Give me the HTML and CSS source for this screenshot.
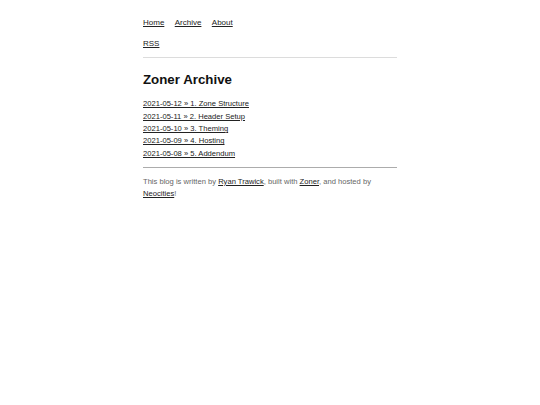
FILE: index.html
```html
<!DOCTYPE html>
<html lang="en">
<head>
<meta charset="utf-8">
<title>Zoner Archive</title>
<link rel="stylesheet" href="styles.css">
</head>
<body>
<div class="page">
  <nav class="nav">
    <div class="nav-row">
      <a href="#">Home</a>
      <a href="#">Archive</a>
      <a href="#">About</a>
    </div>
    <div class="nav-row rss-row">
      <a href="#">RSS</a>
    </div>
  </nav>
  <hr class="rule-top">
  <main>
    <h1 class="title">Zoner Archive</h1>
    <ul class="archive">
      <li><a href="#">2021-05-12 » 1. Zone Structure</a></li>
      <li><a href="#">2021-05-11 » 2. Header Setup</a></li>
      <li><a href="#">2021-05-10 » 3. Theming</a></li>
      <li><a href="#">2021-05-09 » 4. Hosting</a></li>
      <li><a href="#">2021-05-08 » 5. Addendum</a></li>
    </ul>
  </main>
  <hr class="rule-bottom">
  <footer class="footer">
    This blog is written by <a href="#">Ryan Trawick</a>, built with <a href="#">Zoner</a>, and hosted by <a href="#">Neocities</a>!
  </footer>
</div>
</body>
</html>
```

FILE: styles.css
```css
html, body {
  margin: 0;
  padding: 0;
  background: #fff;
}
body {
  font-family: "Liberation Sans", Arial, sans-serif;
  color: #222;
}
a {
  color: #222;
  text-decoration: underline;
}
.page {
  width: 254px;
  margin: 0 auto;
  padding-top: 16.5px;
}
.nav {
  display: flex;
  flex-direction: column;
  row-gap: 9.5px;
  font-size: 8px;
  line-height: 12px;
}
.nav-row {
  display: flex;
  column-gap: 10.4px;
}
.rule-top {
  border: 0;
  height: 1.4px;
  background: #dcdcdc;
  margin: 6.8px 0 0 0;
}
.title {
  font-size: 13.3px;
  line-height: 16px;
  font-weight: bold;
  color: #111;
  margin: 13.9px 0 0 0;
}
.archive {
  list-style: none;
  margin: 10.4px 0 0 0;
  padding: 0;
  font-size: 7.6px;
  line-height: 12.3px;
}
.rule-bottom {
  border: 0;
  height: 1px;
  background: #acacac;
  margin: 7px 0 0 0;
}
.footer {
  margin-top: 7.6px;
  font-size: 7.6px;
  line-height: 12px;
  color: #666;
}
```
